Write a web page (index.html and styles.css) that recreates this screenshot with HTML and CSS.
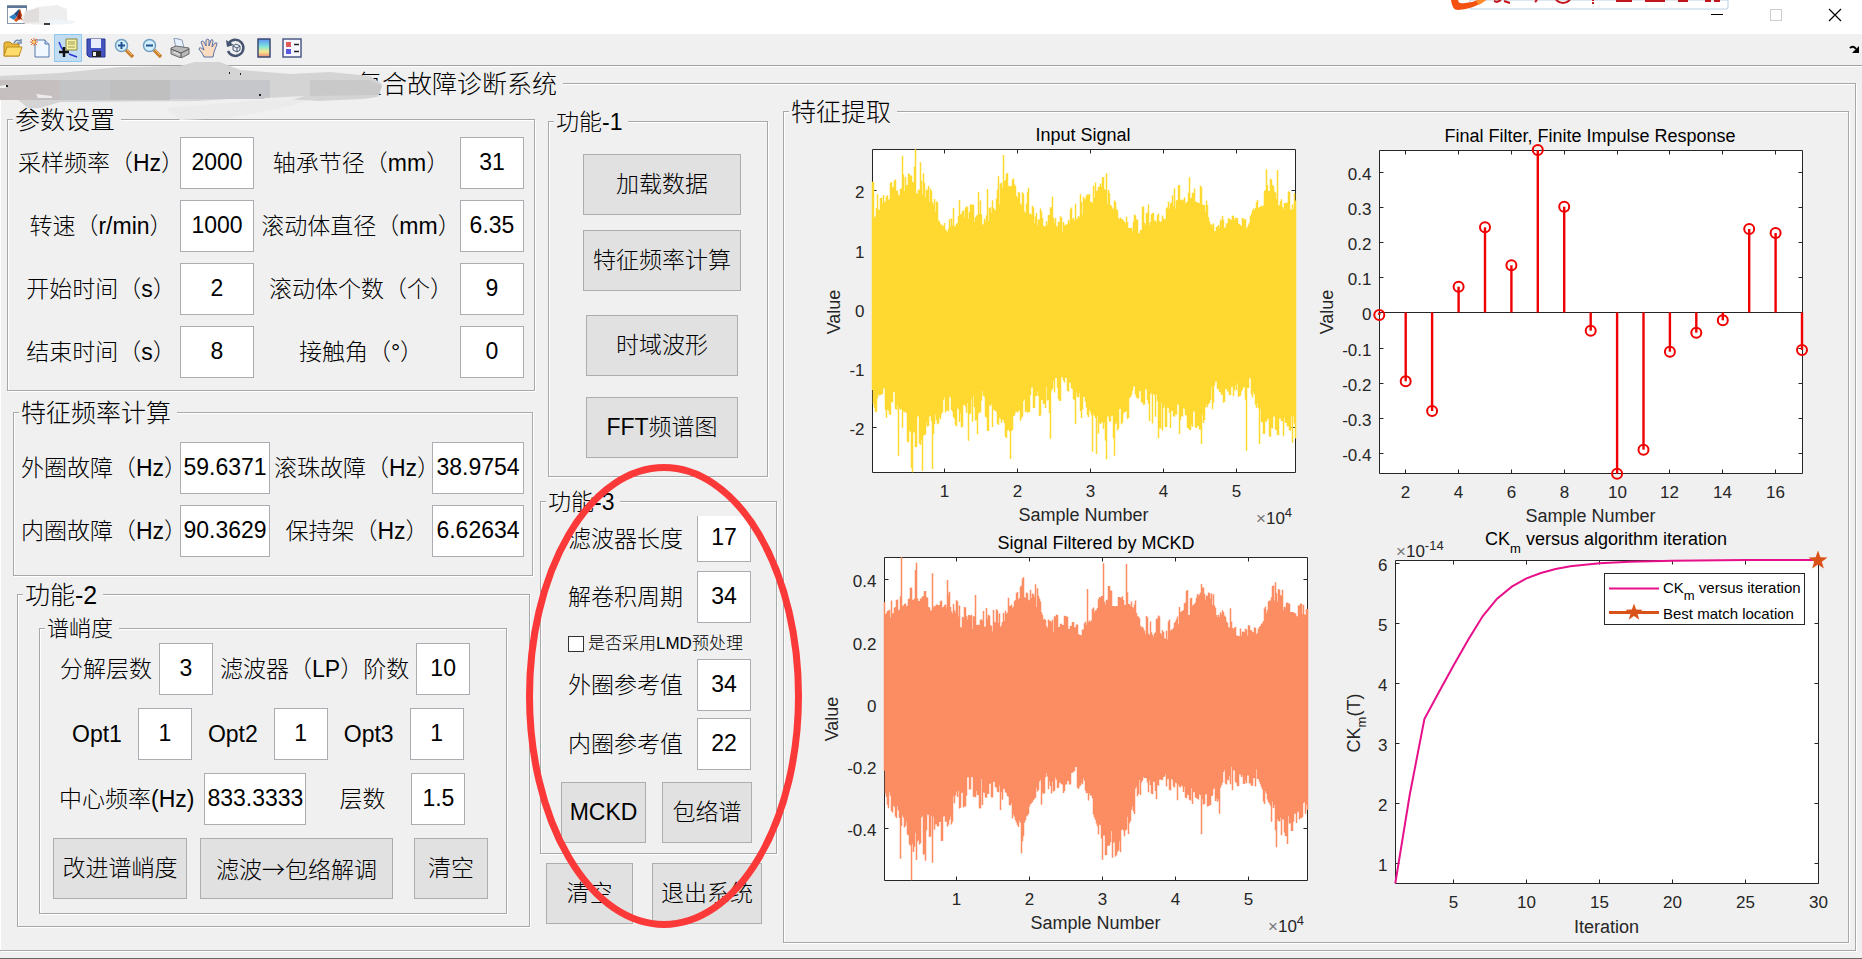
FILE: index.html
```html
<!DOCTYPE html>
<html lang="zh-CN">
<head>
<meta charset="utf-8">
<title>复合故障诊断系统</title>
<link rel="stylesheet" href="styles.css">
</head>
<body>
<div class="window">
  <header class="titlebar">
    <svg class="app-icon" width="76" height="28" viewBox="0 0 76 28" aria-hidden="true">
      <rect x="0.5" y="0.5" width="19" height="18" fill="#fff" stroke="#8a97a8"/>
      <path d="M0 1h20v2H0z" fill="#5c7896"/>
      <path d="M2 12l5-3 3 3-3 3z" fill="#2f7fc0"/>
      <path d="M7 9l5-5 1 2-3 6z" fill="#1c4f86"/>
      <path d="M13 4l4 12-4-2-4 3-2-2 3-3z" fill="#d9541a"/>
      <path d="M13 4l1 9-2 2-2-3z" fill="#8b1f10"/>
      <path d="M14 12l6-5 10-5 20-2 10 4v12l-20 4-22-1z" fill="#eeeeee"/>
      <path d="M40 14l30 2-6 3-24 1z" fill="#eef4f8"/>
      <path d="M18 6l14-3v14l-16 1z" fill="#e2dddd"/>
      <path d="M37 19h6" stroke="#000" stroke-width="1.500"/>
    </svg>
    <div class="window-buttons">
      <button type="button" aria-label="最小化"><svg width="14" height="14" viewBox="0 0 14 14"><path d="M1 6.500h12" stroke="#000"/></svg></button>
      <button type="button" aria-label="最大化" disabled><svg width="14" height="14" viewBox="0 0 14 14"><rect x="1.500" y="1.500" width="11" height="11" fill="none" stroke="#ccc"/></svg></button>
      <button type="button" aria-label="关闭"><svg width="14" height="14" viewBox="0 0 14 14"><path d="M1 1l12 12M13 1L1 13" stroke="#000" stroke-width="1.200"/></svg></button>
    </div>
    <svg class="ime-bar" width="280" height="12" viewBox="0 0 280 12" aria-hidden="true">
      <path d="M20 0h258v7q0 2-2 2H20z" fill="#fff" stroke="#b9cfe2"/>
      <path d="M1 0q1 10 7 10 16-1 28-10h-8q-9 4-18 3-2-1-2-3z" fill="#f4500f"/>
      <path d="M26 0h10q-3 3-8 5z" fill="#ff8a2a"/>
      <g fill="none" stroke="#c3161c" stroke-width="2">
        <path d="M44 1l3 1 4-2M54 1l6 2M87 0l-2 2M106 0q7 6 14 0M143 0v1M143 2v2M166 1h16"/>
        <path d="M195 1h20M206 0v2M228 1h10M255 1h6M264 1h6"/>
      </g>
    </svg>
  </header>

  <nav class="toolbar" aria-label="工具栏">
    <button class="tool" type="button" aria-label="打开"><svg viewBox="0 0 20 20"><path d="M1 6q0-2 2-2h4l2 2h7v12H1z" fill="#e9b93a" stroke="#b58318"/><path d="M1 18l3-9h15l-3 9z" fill="#fddc6c" stroke="#c0901f"/><path d="M11 5q2-4 6-2M18 1v4h-4" fill="none" stroke="#6f8bb0" stroke-width="1.500"/></svg></button>
    <button class="tool" type="button" aria-label="新建"><svg viewBox="0 0 20 20"><path d="M5 2h10l4 4v13H5z" fill="#f2f8ff" stroke="#5578a8"/><path d="M15 2v4h4" fill="#bcd2ee" stroke="#5578a8"/><path d="M4 0v8M0 4h8M1 1l6 6M7 1L1 7" stroke="#e2622c"/><circle cx="4" cy="4" r="1.500" fill="#ffd85a"/></svg></button>
    <button class="tool is-on" type="button" aria-label="数据游标"><svg viewBox="0 0 20 20"><path d="M8 1h11v11H8z" fill="#f3f0a5" stroke="#8a8845"/><path d="M10 4h7M10 6h7M10 9h7" stroke="#a09d55"/><path d="M1 4q2 6 5 9M11 16l8 3" fill="none" stroke="#2c37d8" stroke-width="1.500"/><path d="M6 9v10M1 14h10" stroke="#111" stroke-width="2.500"/></svg></button>
    <button class="tool" type="button" aria-label="保存"><svg viewBox="0 0 20 20"><path d="M1 1h18v18H3l-2-2z" fill="#4453bf" stroke="#27338f"/><path d="M5 1h10v9H5z" fill="#e8ecfb"/><path d="M6 13h9v6H6z" fill="#222"/><path d="M7 14h3v4H7z" fill="#eee"/></svg></button>
    <button class="tool" type="button" aria-label="放大"><svg viewBox="0 0 20 20"><path d="M12 12l7 7" stroke="#c87f2d" stroke-width="3.500"/><path d="M12 11l6 6" stroke="#f2c27a"/><circle cx="7.500" cy="7.500" r="6" fill="#d3effd" stroke="#6f9dc0" stroke-width="1.500"/><path d="M7.500 4v7M4 7.500h7" stroke="#205494" stroke-width="2"/></svg></button>
    <button class="tool" type="button" aria-label="缩小"><svg viewBox="0 0 20 20"><path d="M12 12l7 7" stroke="#c87f2d" stroke-width="3.500"/><path d="M12 11l6 6" stroke="#f2c27a"/><circle cx="7.500" cy="7.500" r="6" fill="#d3effd" stroke="#6f9dc0" stroke-width="1.500"/><path d="M4 7.500h7" stroke="#205494" stroke-width="2"/></svg></button>
    <button class="tool" type="button" aria-label="打印"><svg viewBox="0 0 20 20"><path d="M4 0l8 2 2 8-8 1z" fill="#e8f1ff" stroke="#8a9bb3"/><path d="M1 10l5-2 13 2v6l-8 4-10-4z" fill="#b9b9b9" stroke="#6b6b6b"/><path d="M1 11l10 4 8-4M11 15v5" fill="none" stroke="#555"/><path d="M4 14l6 3" stroke="#eee"/></svg></button>
    <button class="tool" type="button" aria-label="平移"><svg viewBox="0 0 20 20"><path d="M6 19q-1-3-5-8 0-3 5 1L3 4q1-2 3 0l2 4V2q2-2 3 0v6l2-6q2-1 2 1l-1 6 3-4q2-1 2 1l-3 8-1 5z" fill="#fbdcc0" stroke="#5b71a6"/></svg></button>
    <button class="tool" type="button" aria-label="三维旋转"><svg viewBox="0 0 20 20"><path d="M3 5a8 8 0 1 1-1 8" fill="none" stroke="#46556f" stroke-width="2.500"/><path d="M0 2l1 7 7-2z" fill="#46556f"/><path d="M7 8l3-2 4 2v4l-3 2-4-2zM7 8l4 2 3-2M11 10v4" fill="#e9edf4" stroke="#46556f"/></svg></button>
    <button class="tool" type="button" aria-label="颜色栏"><svg viewBox="0 0 20 20"><defs><linearGradient id="bar" x2="0" y2="1"><stop stop-color="#5d8ef0"/><stop offset=".4" stop-color="#7de3e0"/><stop offset=".7" stop-color="#f2ea8e"/><stop offset="1" stop-color="#f08a7a"/></linearGradient></defs><rect x="4" y="1" width="12" height="18" fill="url(#bar)" stroke="#3d4a74" stroke-width="1.500"/></svg></button>
    <button class="tool" type="button" aria-label="图例"><svg viewBox="0 0 20 20"><rect x="1" y="1" width="18" height="18" fill="#f7f8ff" stroke="#4c5a86" stroke-width="1.500"/><path d="M4 4h5v5H4z" fill="#e05a5a"/><path d="M4 11h5v5H4z" fill="#5a5ae0"/><path d="M12 6.500h5M12 13.500h5" stroke="#222" stroke-width="1.500"/></svg></button>
    <svg class="dock-arrow" width="12" height="10" viewBox="0 0 12 10" aria-hidden="true"><path d="M1 3q3-3 6 1" fill="none" stroke="#000" stroke-width="2"/><path d="M10 1v7H3z"/></svg>
  </nav>

  <main class="main">
    <svg class="smear" width="384" height="56" viewBox="0 0 384 56" aria-hidden="true">
      <path d="M166 42L310 30l20-2-40 12-60 12-50 2z" fill="#ebebeb"/>
      <path d="M0 10l60-3 60-6 60-1 15-4h25l20 8 50 4 40-2 40 4 12 8-4 13-15 2-45 2-60-4-60 4-138 1-20 6H28L16 32H0z" fill="#d4d4d4"/>
      <path d="M0 14h60v20H0z" fill="#c6bfc0"/>
      <path d="M60 14h50v20H60z" fill="#c2c4c6"/>
      <path d="M110 14h60v20h-60z" fill="#bfbfbf"/>
      <path d="M170 14h100v19H170z" fill="#c6c7ca"/>
      <path d="M36 28l16 2v2H38zM265 32l40-2-20 6-25-1z" fill="#ececec"/>
      <path d="M310 14h60l12 6-3 9-69 1z" fill="#c9c9c9"/>
      <path d="M0 20l6-1v3H0z" fill="#f0f0f0"/>
      <path d="M6 20h2M259 29h2M229 7h1M240 8h1" stroke="#222" stroke-width="2"/>
    </svg>
    <fieldset class="panel panel-root">
      <legend>复合故障诊断系统</legend>
      <div class="columns">

        <div class="col-params">
          <fieldset class="panel panel-params">
            <legend>参数设置</legend>
            <div class="form-grid grid-params">
              <label for="fs">采样频率（Hz）</label><input id="fs" value="2000">
              <label for="pitch">轴承节径（mm）</label><input id="pitch" value="31">
              <label for="rpm">转速（r/min）</label><input id="rpm" value="1000">
              <label for="ball">滚动体直径（mm）</label><input id="ball" value="6.35">
              <label for="t0">开始时间（s）</label><input id="t0" value="2">
              <label for="count">滚动体个数（个）</label><input id="count" value="9">
              <label for="t1">结束时间（s）</label><input id="t1" value="8">
              <label for="angle">接触角（°）</label><input id="angle" value="0">
            </div>
          </fieldset>

          <fieldset class="panel panel-freq">
            <legend>特征频率计算</legend>
            <div class="form-grid grid-freq">
              <label for="outer">外圈故障（Hz）</label><input id="outer" value="59.6371">
              <label for="roller">滚珠故障（Hz）</label><input id="roller" value="38.9754">
              <label for="inner">内圈故障（Hz）</label><input id="inner" value="90.3629">
              <label for="cage">保持架（Hz）</label><input id="cage" value="6.62634">
            </div>
          </fieldset>

          <fieldset class="panel panel-f2">
            <legend>功能-2</legend>
            <fieldset class="panel panel-kurt">
              <legend>谱峭度</legend>
              <div class="kurt-rows">
                <div class="row row-levels">
                  <label for="lv">分解层数</label><input id="lv" value="3">
                  <label for="lp">滤波器（LP）阶数</label><input id="lp" value="10">
                </div>
                <div class="row row-opts">
                  <label for="o1">Opt1</label><input id="o1" value="1">
                  <label for="o2">Opt2</label><input id="o2" value="1">
                  <label for="o3">Opt3</label><input id="o3" value="1">
                </div>
                <div class="row row-center">
                  <label for="fc">中心频率(Hz)</label><input id="fc" class="wide" value="833.3333">
                  <label for="layer" class="layer">层数</label><input id="layer" value="1.5">
                </div>
                <div class="row-buttons">
                  <button class="btn btn-kurt" type="button">改进谱峭度</button>
                  <button class="btn btn-env" type="button">滤波→包络解调</button>
                  <button class="btn btn-clear" type="button">清空</button>
                </div>
              </div>
            </fieldset>
          </fieldset>
        </div>

        <div class="col-functions">
          <fieldset class="panel panel-f1">
            <legend>功能-1</legend>
            <div class="f1-buttons">
              <button class="btn" type="button">加载数据</button>
              <button class="btn" type="button">特征频率计算</button>
              <button class="btn slim" type="button">时域波形</button>
              <button class="btn slim" type="button">FFT频谱图</button>
            </div>
          </fieldset>

          <fieldset class="panel panel-f3">
            <legend>功能-3</legend>
            <div class="f3-rows">
              <div class="f3-row"><label for="flen">滤波器长度</label><input id="flen" class="cut" value="17"></div>
              <div class="f3-row"><label for="per">解卷积周期</label><input id="per" value="34"></div>
              <div class="f3-check"><input type="checkbox" id="lmd"><label for="lmd">是否采用LMD预处理</label></div>
              <div class="f3-row"><label for="oref">外圈参考值</label><input id="oref" value="34"></div>
              <div class="f3-row"><label for="iref">内圈参考值</label><input id="iref" value="22"></div>
              <div class="f3-buttons">
                <button class="btn btn-mckd" type="button">MCKD</button>
                <button class="btn btn-spec" type="button">包络谱</button>
              </div>
            </div>
          </fieldset>

          <div class="bottom-buttons">
            <button class="btn btn-reset" type="button">清空</button>
            <button class="btn btn-exit" type="button">退出系统</button>
          </div>

          <svg class="marker" width="278" height="466" viewBox="0 0 278 466" aria-hidden="true"><ellipse cx="139" cy="233" rx="134.500" ry="228.500" fill="none" stroke="#fc3939" stroke-width="7"/></svg>
        </div>

        <div class="col-charts">
          <fieldset class="panel panel-charts">
            <legend>特征提取</legend>
            <div class="charts">
              <svg id="input-signal" viewBox="0 6 530 404" role="img" aria-label="Input Signal"></svg>
              <svg id="fir" viewBox="0 6 530 404" role="img" aria-label="Final Filter"></svg>
              <svg id="filtered" viewBox="0 0 530 410" role="img" aria-label="Signal Filtered by MCKD"></svg>
              <svg id="ckm" viewBox="0 0 530 410" role="img" aria-label="CKm versus algorithm iteration"></svg>
            </div>
          </fieldset>
        </div>

      </div>
    </fieldset>
  </main>
</div>
<script src="charts.js"></script>
</body>
</html>
```

FILE: styles.css
```css
* { box-sizing: border-box; }

body {
  margin: 0;
  background: #f0f0f0;
  color: #000;
  font-family: "Liberation Sans", "Noto Sans CJK SC", sans-serif;
  font-size: 23px;
  font-weight: 300;
  line-height: 30px;
}

button, input {
  font: inherit;
  color: inherit;
}

.window {
  min-height: 100vh;
  display: flex;
  flex-direction: column;
  border-bottom: 1px solid #6a6668;
  overflow: hidden;
}

/* Title bar */
.titlebar {
  position: relative;
  height: 34px;
  padding: 5px 13px 0 7px;
  display: flex;
  justify-content: space-between;
  background: #fff;
}

.window-buttons {
  display: flex;
  gap: 31px;
  height: 20px;
}

.window-buttons button {
  width: 28px;
  padding: 0;
  border: 0;
  background: none;
  display: grid;
  place-items: center;
}

.ime-bar {
  position: absolute;
  top: 0;
  right: 132px;
}

/* Toolbar */
.toolbar {
  height: 32px;
  display: flex;
  align-items: flex-start;
  border-bottom: 1px solid #a0a0a0;
  box-shadow: 0 1px 0 #fff;
}

.tool {
  width: 28px;
  height: 28px;
  padding: 0;
  border: 1px solid transparent;
  background: none;
  display: grid;
  place-items: center;
}

.tool:first-child { width: 26px; }
.tool svg { width: 20px; height: 20px; }
.tool.is-on { border-color: #90c8f0; background: #c2dcf2; }

.dock-arrow { margin: 11px 1px 0 auto; }

/* Etched panels */
.main {
  position: relative;
  padding: 4px 6px 0 0;
}

.panel {
  min-width: 0;
  margin: 0;
  padding: 0;
  border: 1px solid #a8a8a8;
  box-shadow: 1px 1px 0 #fff, inset 1px 1px 0 #fff;
}

.panel > legend {
  margin-left: 5px;
  padding: 2px 6px 0 2px;
  background: #f0f0f0;
  font-size: 25px;
  line-height: 28px;
}

.panel-root {
  border-left: 0;
  padding-bottom: 7px;
}

.panel-root > legend {
  margin-left: 0;
  padding: 2px 6px 0 357px;
  line-height: 24px;
}

.smear {
  position: absolute;
  top: 0;
  left: 0;
  overflow: visible;
}

.columns {
  display: grid;
  grid-template-columns: minmax(0, 540fr) minmax(0, 237fr) minmax(0, 1078fr);
  align-items: start;
}

/* Shared controls */
label { white-space: nowrap; }

input:not([type="checkbox"]) {
  width: 54px;
  height: 52px;
  padding: 0 0 2px;
  border: 1px solid #abadb3;
  border-radius: 0;
  background: #fff;
  text-align: center;
}

.btn {
  height: 61px;
  padding: 0 0 2px;
  border: 1px solid #adadad;
  border-radius: 0;
  background: #e1e1e1;
  white-space: nowrap;
}

.form-grid {
  display: grid;
  align-items: center;
  row-gap: 11px;
}

.form-grid label {
  display: flex;
  justify-content: center;
}

/* Left column */
.col-params { padding-top: 8px; }

.panel-params { margin: 0 5px 6px 7px; }

.grid-params {
  grid-template-columns: 158px 82px minmax(0, 1fr) 64px;
  padding: 3px 10px 12px 14px;
}

.grid-params input { width: 74px; }
.grid-params input:nth-of-type(even) { width: 64px; }

.panel-freq { margin: 0 7px 3px 13px; }

.grid-freq {
  grid-template-columns: 152px 102px minmax(0, 1fr) 92px;
  padding: 15px 8px 18px 14px;
}

.grid-freq input { width: 90px; }
.grid-freq input:nth-of-type(even) { width: 92px; }

.panel-f2 {
  margin: 0 10px 0 17px;
  padding-bottom: 12px;
}

.panel-kurt { margin: 6px 22px 0 21px; }

.panel-kurt > legend {
  font-size: 22px;
  line-height: 24px;
}

.kurt-rows {
  display: flex;
  flex-direction: column;
  gap: 13px;
  padding: 2px 13px 14px;
}

.row {
  display: flex;
  align-items: center;
}

.row-levels { gap: 7px; padding-left: 7px; }
.row-opts { gap: 16px; padding-left: 19px; }
.row-center { gap: 10px; padding-left: 6px; }
.row-center .wide { width: 102px; }
.row-center .layer { margin: 0 16px 0 23px; }

.row-buttons {
  display: grid;
  grid-template-columns: 147px 214px 74px;
}

.btn-kurt { width: 134px; }

.btn-env {
  width: 193px;
  font-family: "Noto Sans CJK SC", sans-serif;
}

/* Middle column */
.col-functions {
  position: relative;
  padding-top: 10px;
}

.panel-f1 { margin: 0 9px 9px 8px; }

.panel-f1 > legend,
.panel-f3 > legend { font-size: 23px; }

.f1-buttons {
  display: grid;
  grid-template-rows: 76px 85px 82px 61px;
  justify-items: center;
  padding: 18px 0 18px 8px;
}

.f1-buttons .btn { width: 158px; }
.f1-buttons .slim { width: 152px; }

.f3-rows {
  display: grid;
  grid-template-rows: 55px 52px 36px 59px 64px 60px;
  align-items: start;
  padding: 0 0 11px 27px;
}

.f3-row {
  display: flex;
  align-items: center;
  gap: 14px;
}

.f3-row .cut {
  height: 46px;
  border-top: 0;
}

.f3-check {
  display: flex;
  align-items: center;
  gap: 4px;
  padding-top: 10px;
  font-size: 17px;
  line-height: 22px;
}

.f3-check input {
  appearance: none;
  width: 16px;
  height: 16px;
  margin: 0;
  border: 1px solid #333;
  background: #fff;
}

.f3-check input:checked { background: #333; }

.f3-buttons {
  display: flex;
  gap: 16px;
  margin-left: -7px;
}

.btn-mckd { width: 85px; }
.btn-spec { width: 90px; }

.bottom-buttons {
  display: flex;
  gap: 19px;
  padding: 9px 0 0 6px;
}

.btn-reset { width: 87px; }
.btn-exit { width: 110px; }

.marker {
  position: absolute;
  top: 367px;
  left: -15px;
  pointer-events: none;
}

/* Charts */
.col-charts { padding: 0 6px; }

.charts {
  display: grid;
  grid-template-columns: 1fr 1fr;
  padding: 0 2px 2px;
}

.charts svg {
  display: block;
  width: 100%;
  overflow: visible;
}

.charts text {
  font-size: 17px;
  fill: #262626;
  font-weight: 400;
}

.charts .title { font-size: 18px; fill: #000; }
.charts .axis-label { font-size: 18px; }
.charts .legend-text { font-size: 15px; fill: #000; }
.charts .small { font-size: 13px; }
.charts .times { fill: #777; }
```

FILE: charts.js
```js
const NS = "http://www.w3.org/2000/svg";

function add(parent, tag, attrs, html) {
  const el = document.createElementNS(NS, tag);
  for (const key in attrs) el.setAttribute(key, attrs[key]);
  if (html !== undefined) el.innerHTML = html;
  parent.appendChild(el);
  return el;
}

/* Box with inward ticks on all sides, tick labels and captions. */
function axes(svg, o) {
  const [x0, y0] = o.origin, x1 = x0 + 423, y1 = y0 + 323;
  let d = `M${x0} ${y0}H${x1}V${y1}H${x0}Z`;
  o.xt.forEach(([x]) => { d += `M${x} ${y0}v4M${x} ${y1}v-4`; });
  o.yt.forEach(([y]) => { d += `M${x0} ${y}h4M${x1} ${y}h-4`; });
  add(svg, "path", { d, fill: "none", stroke: "#262626" });
  o.xt.forEach(([x, t]) => add(svg, "text", { x, y: y1 + 24, "text-anchor": "middle" }, t));
  o.yt.forEach(([y, t]) => add(svg, "text", { x: x0 - 8, y: y + 7, "text-anchor": "end" }, t));
  add(svg, "text", { class: "title", x: o.title[0], y: o.title[1], "text-anchor": "middle" }, o.title[2]);
  add(svg, "text", { class: "axis-label", x: x0 + 211, y: o.labelY, "text-anchor": "middle" }, o.xLabel);
  const [lx, ly] = o.yPos;
  add(svg, "text", { class: "axis-label", x: lx, y: ly, "text-anchor": "middle", transform: `rotate(-90 ${lx} ${ly})` }, o.yLabel);
  if (o.exp) add(svg, "text", { x: o.exp[0], y: o.exp[1] },
    `<tspan class="times">×</tspan>10<tspan class="small" dy="-7">${o.exp[2]}</tspan>`);
}

function background(svg, [x, y]) {
  add(svg, "rect", { x, y, width: 423, height: 323, fill: "#fff" });
}

function at(points, x, k) {
  let i = 1;
  while (i < points.length - 1 && points[i][0] < x) i++;
  const a = points[i - 1], b = points[i];
  const t = Math.min(1, Math.max(0, (x - a[0]) / (b[0] - a[0])));
  return a[k] + (b[k] - a[k]) * t;
}

/* Dense waveform: one column per pixel between two noisy envelopes. */
function waveform(svg, o) {
  let seed = o.seed;
  const rnd = () => (seed = (seed * 16807) % 2147483647) / 2147483647;
  const x0 = o.origin[0], sx = o.sx, toY = v => v / 3 - o.oy;
  const reach = () => (rnd() < 0.2 ? 0.8 + rnd() * 0.5 : rnd() * 0.85);
  const top = [], bottom = [];
  let a = 0, b = 0;
  for (let i = 0; i < 424; i++) {
    const u = (x0 + i + 6) * sx;
    if (i % 2 === 0 || rnd() < 0.3) a = reach();
    if (i % 2 === 1 || rnd() < 0.3) b = reach();
    const ti = at(o.top, u, 2), to = at(o.top, u, 1);
    const bi = at(o.bottom, u, 1), bo = at(o.bottom, u, 2);
    top[i] = toY(ti + (to - ti) * a);
    bottom[i] = toY(bi + (bo - bi) * b);
  }
  o.topSpikes.forEach(([u, v]) => { top[Math.round(u / sx - 6 - x0)] = toY(v); });
  o.bottomSpikes.forEach(([u, v]) => { bottom[Math.round(u / sx - 6 - x0)] = toY(v); });
  let d = "";
  for (let i = 0; i < 424; i++) d += `M${x0 + i} ${top[i].toFixed(1)}V${bottom[i].toFixed(1)}`;
  add(svg, "path", { d, fill: "none", stroke: o.color, "stroke-width": 1.5 });
}

function star(svg, cx, cy, r) {
  let pts = "";
  for (let i = 0; i < 10; i++) {
    const q = i % 2 ? r * 0.4 : r, a = Math.PI * (i / 5 - 0.5);
    pts += `${(cx + q * Math.cos(a)).toFixed(1)},${(cy + q * Math.sin(a)).toFixed(1)} `;
  }
  add(svg, "polygon", { points: pts, fill: "#d95319" });
}

/* Input Signal */
let svg = document.getElementById("input-signal");
let origin = [86.5, 29.5];
background(svg, origin);
axes(svg, {
  origin, title: [297, 21, "Input Signal"], xLabel: "Sample Number", labelY: 401,
  yLabel: "Value", yPos: [54, 192], exp: [470, 404, "4"],
  xt: [[158.5, "1"], [231.5, "2"], [304.5, "3"], [377.5, "4"], [450.5, "5"]],
  yt: [[70.5, "2"], [130.5, "1"], [189.5, "0"], [248.5, "-1"], [307.5, "-2"]]
});
waveform(svg, {
  origin, seed: 4711, sx: 2.904, oy: 30, color: "#ffd92f",
  top: [[268, 290, 400], [300, 290, 370], [340, 250, 320], [390, 230, 310], [430, 265, 330], [455, 330, 400], [490, 370, 430], [540, 325, 390], [600, 350, 410], [640, 280, 340], [680, 250, 310], [720, 310, 390], [740, 350, 415], [790, 360, 410], [826, 400, 440], [860, 345, 400], [900, 290, 360], [940, 265, 340], [980, 340, 380], [1010, 370, 430], [1050, 360, 430], [1100, 360, 410], [1140, 310, 380], [1190, 290, 330], [1230, 300, 350], [1250, 390, 430], [1300, 370, 415], [1350, 400, 440], [1390, 290, 380], [1420, 265, 330], [1450, 290, 360], [1494, 320, 370]],
  bottom: [[268, 900, 1000], [300, 890, 970], [340, 910, 1010], [390, 980, 1060], [430, 960, 1050], [460, 970, 1010], [485, 890, 980], [520, 940, 1035], [550, 930, 1000], [580, 890, 990], [620, 940, 1010], [660, 980, 1060], [690, 960, 1020], [730, 890, 970], [770, 890, 960], [800, 860, 950], [830, 860, 940], [860, 880, 980], [890, 910, 960], [930, 980, 1050], [970, 970, 1050], [1000, 900, 990], [1030, 880, 960], [1060, 890, 950], [1090, 910, 1000], [1140, 930, 1000], [1190, 960, 1030], [1230, 960, 1030], [1255, 870, 960], [1300, 880, 920], [1340, 870, 910], [1365, 860, 930], [1390, 930, 1010], [1430, 970, 1030], [1494, 960, 1050]],
  topSpikes: [[357, 197], [390, 230], [393, 178], [408, 217], [650, 195], [947, 250], [1188, 262], [1412, 238], [1445, 240], [634, 259], [604, 297], [790, 320], [577, 306], [1222, 287]],
  bottomSpikes: [[345, 1097], [383, 1133], [386, 1147], [415, 1143], [442, 1137], [574, 1033], [547, 1052], [668, 1107], [786, 1046], [907, 1085], [918, 1092], [949, 1108], [970, 1097], [1098, 1045], [1223, 1062], [1355, 1082], [1393, 1062], [1488, 1058]]
});

/* Final filter stem plot */
svg = document.getElementById("fir");
origin = [63.5, 30.5];
background(svg, origin);
axes(svg, {
  origin, title: [274, 22, "Final Filter, Finite Impulse Response"], xLabel: "Sample Number", labelY: 402,
  yLabel: "Value", yPos: [17, 192],
  xt: [[89.5, "2"], [142.5, "4"], [195.5, "6"], [248.5, "8"], [301.5, "10"], [353.5, "12"], [406.5, "14"], [459.5, "16"]],
  yt: [[52.5, "0.4"], [87.5, "0.3"], [122.5, "0.2"], [157.5, "0.1"], [192.5, "0"], [228.5, "-0.1"], [263.5, "-0.2"], [298.5, "-0.3"], [333.5, "-0.4"]]
});
add(svg, "path", { d: "M63.5 192.5h423", stroke: "#262626" });
[675, 874, 963, 590, 412, 526, 180, 350, 722, 1151, 1079, 785, 728, 691, 417, 429, 780].forEach((v, i) => {
  const x = (63.3 + i * 26.42).toFixed(1), y = (v / 3 - 30).toFixed(1);
  add(svg, "path", { d: `M${x} 192.5V${y}`, stroke: "#f00000", "stroke-width": 2.4 });
  add(svg, "circle", { cx: x, cy: y, r: 5, fill: "none", stroke: "#f00000", "stroke-width": 2 });
});

/* Filtered signal */
svg = document.getElementById("filtered");
origin = [98.5, 27.5];
background(svg, origin);
axes(svg, {
  origin, title: [310, 19, "Signal Filtered by MCKD"], xLabel: "Sample Number", labelY: 399,
  yLabel: "Value", yPos: [52, 189], exp: [482, 402, "4"],
  xt: [[170.5, "1"], [243.5, "2"], [316.5, "3"], [389.5, "4"], [462.5, "5"]],
  yt: [[49.5, "0.4"], [112.5, "0.2"], [174.5, "0"], [236.5, "-0.2"], [298.5, "-0.4"]]
});
waveform(svg, {
  origin, seed: 9973, sx: 2.8, oy: 10, color: "#fc8d62",
  top: [[292, 260, 320], [340, 225, 280], [370, 215, 260], [410, 210, 265], [440, 240, 285], [475, 215, 260], [495, 260, 330], [540, 280, 335], [580, 250, 320], [610, 285, 350], [640, 240, 300], [680, 185, 240], [720, 210, 270], [740, 270, 310], [760, 290, 345], [800, 300, 340], [850, 310, 350], [880, 260, 300], [900, 210, 260], [940, 210, 260], [980, 220, 265], [1000, 260, 300], [1035, 310, 370], [1060, 290, 330], [1080, 320, 370], [1110, 260, 320], [1145, 225, 290], [1180, 208, 225], [1215, 215, 270], [1240, 270, 330], [1270, 320, 350], [1300, 310, 350], [1335, 320, 370], [1360, 270, 310], [1380, 200, 250], [1420, 235, 290], [1474, 240, 290]],
  bottom: [[292, 750, 810], [310, 820, 880], [330, 850, 910], [350, 900, 980], [375, 920, 1010], [400, 880, 980], [440, 890, 950], [470, 880, 940], [495, 780, 860], [520, 770, 840], [570, 770, 850], [610, 790, 860], [650, 820, 890], [680, 900, 960], [700, 830, 870], [740, 760, 830], [780, 750, 800], [830, 730, 810], [850, 760, 840], [880, 850, 920], [900, 920, 1010], [930, 920, 1000], [970, 890, 950], [995, 800, 860], [1020, 750, 800], [1060, 770, 830], [1090, 750, 810], [1130, 790, 850], [1180, 820, 880], [1215, 800, 860], [1245, 730, 780], [1270, 740, 800], [1300, 750, 800], [1340, 740, 800], [1370, 820, 880], [1400, 890, 940], [1440, 870, 940], [1474, 840, 890]],
  topSpikes: [[340, 112], [381, 128], [378, 150], [428, 160], [470, 180], [681, 172], [906, 130], [969, 132], [1181, 192], [1388, 187], [546, 225], [860, 207], [1262, 265]],
  bottomSpikes: [[337, 1016], [368, 1081], [381, 1020], [408, 1022], [428, 1028], [677, 1000], [904, 1019], [931, 1013], [952, 997], [1180, 943], [1390, 982], [1230, 881], [1420, 972]]
});

/* CKm convergence */
svg = document.getElementById("ckm");
origin = [79.5, 30.5];
const ckm = drop => `CK<tspan class="small" dy="${drop}">m</tspan><tspan dy="-${drop}">`;
background(svg, origin);
axes(svg, {
  origin, title: [290, 15, ckm(8) + " versus algorithm iteration</tspan>"], xLabel: "Iteration", labelY: 403,
  yLabel: ckm(6) + "(T)</tspan>", yPos: [44, 193], exp: [80, 27, "-14"],
  xt: [[137.5, "5"], [210.5, "10"], [283.5, "15"], [356.5, "20"], [429.5, "25"], [502.5, "30"]],
  yt: [[33.5, "6"], [93.5, "5"], [153.5, "4"], [213.5, "3"], [273.5, "2"], [333.5, "1"]]
});
const curve = [[266, 1120], [306, 855], [347, 627], [388, 545], [429, 465], [470, 388], [510, 318], [550, 266], [591, 230], [632, 205], [672, 189], [713, 177], [754, 169], [795, 164], [836, 160], [920, 155], [1040, 152], [1243, 150], [1444, 150]];
add(svg, "polyline", {
  points: curve.map(([x, y]) => `${(x / 2.79 - 16).toFixed(1)},${(y / 3 - 20).toFixed(1)}`).join(" "),
  fill: "none", stroke: "#e7108a", "stroke-width": 2
});
star(svg, 502, 30.5, 10);
add(svg, "rect", { x: 288.5, y: 43.5, width: 200, height: 51, fill: "#fff", stroke: "#262626" });
add(svg, "path", { d: "M293 58.5h50", stroke: "#e7108a", "stroke-width": 2 });
add(svg, "path", { d: "M293 82.5h50", stroke: "#d95319", "stroke-width": 3 });
star(svg, 318, 82.5, 9);
add(svg, "text", { class: "legend-text", x: 347, y: 63 }, ckm(7) + " versus iteration</tspan>");
add(svg, "text", { class: "legend-text", x: 347, y: 89 }, "Best match location");
```
